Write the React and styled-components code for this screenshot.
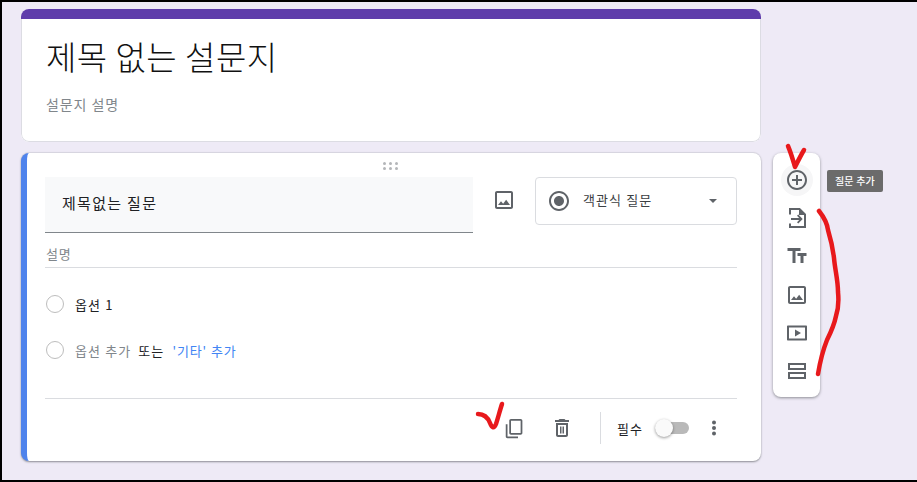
import React from "react";
import styled, { createGlobalStyle } from "styled-components";

const Global = createGlobalStyle`
  html, body { margin: 0; padding: 0; }
  body { font-family: "Noto Sans CJK KR", "Noto Sans", sans-serif; }
`;

const Page = styled.div`
  position: relative;
  box-sizing: border-box;
  width: 917px;
  height: 482px;
  border: solid #000;
  border-width: 2px 0 2px 2px;
  background: #eeeaf6;
  padding: 7px 0 0 19px;
  overflow: hidden;
  display: flex;
  gap: 12px;
  align-items: flex-start;
`;

const Column = styled.div`
  width: 740px;
  display: flex;
  flex-direction: column;
  gap: 11px;
`;

const Card = styled.section`
  box-sizing: border-box;
  background: #fff;
  border-radius: 8px;
`;

const HeaderCard = styled(Card)`
  height: 133px;
  display: flex;
  flex-direction: column;
  overflow: hidden;
`;

const AccentBar = styled.div`
  flex: none;
  height: 10px;
  background: #5f3dab;
`;

const HeaderBody = styled.div`
  flex: 1;
  border: 1px solid #dcdce3;
  border-top: 0;
  border-radius: 0 0 8px 8px;
`;

const Title = styled.h1`
  margin: 14px 0 0 24px;
  font-size: 33px;
  line-height: 46px;
  font-weight: 300;
  letter-spacing: 0.5px;
  color: #111;
`;

const FormDesc = styled.p`
  margin: 15px 0 0 24px;
  font-size: 14px;
  line-height: 20px;
  letter-spacing: 0.9px;
  color: #80868b;
`;

const QuestionCard = styled(Card)`
  position: relative;
  height: 308px;
  padding: 24px 24px 0 24px;
  border-left: 6px solid #4f83ec;
  box-shadow: 0 1px 2px rgba(60, 64, 67, 0.55), 0 -1px 1px rgba(60, 64, 67, 0.1);
`;

const DragHandle = styled.div`
  position: absolute;
  top: 9px;
  left: 356px;
  display: grid;
  grid-template-columns: repeat(3, 3px);
  gap: 2px 3px;
  & > i { width: 3px; height: 3px; border-radius: 50%; background: #b4b6b9; }
`;

const TopRow = styled.div`
  display: flex;
  align-items: flex-start;
  margin-left: -6px;
`;

const TitleField = styled.div`
  box-sizing: border-box;
  width: 428px;
  height: 56px;
  padding: 15px 0 0 17px;
  background: #f8f9fa;
  border-bottom: 1px solid #80868b;
  font-size: 15px;
  line-height: 22px;
  letter-spacing: 1.3px;
  color: #202124;
`;

const ImageButton = styled.div`
  width: 62px;
  height: 46px;
  display: flex;
  align-items: center;
  justify-content: center;
`;

const TypeSelect = styled.div`
  box-sizing: border-box;
  width: 202px;
  height: 48px;
  border: 1px solid #dadce0;
  border-radius: 4px;
  display: flex;
  align-items: center;
  padding: 0 18px 0 11px;
  font-size: 13px;
  letter-spacing: 1.1px;
  color: #3c4043;
  & > span { margin: -3px 0 0 12px; flex: 1; }
`;

const Description = styled.div`
  box-sizing: border-box;
  height: 24px;
  margin: 11px 0 0 -6px;
  border-bottom: 1px solid #dadce0;
  padding-left: 1px;
  font-size: 13px;
  line-height: 20px;
  letter-spacing: 0.8px;
  color: #80868b;
`;

const OptionRow = styled.div`
  display: flex;
  align-items: center;
  height: 46px;
  margin-left: -6px;
  font-size: 13px;
  letter-spacing: 1.1px;
  color: ${(p) => (p.$muted ? "#80868b" : "#202124")};
`;

const Options = styled.div`
  padding-top: 13px;
`;

const Radio = styled.span`
  box-sizing: border-box;
  flex: none;
  width: 18px;
  height: 18px;
  margin: 0 11px 0 1px;
  border: 1px solid #bdbdbd;
  border-radius: 50%;
`;

const Dark = styled.span`
  color: #202124;
  margin: 0 8px 0 7px;
`;

const LinkText = styled.span`
  color: #4285f4;
  letter-spacing: 0.9px;
`;

const Footer = styled.div`
  margin: 25px 0 0 -6px;
  border-top: 1px solid #dadce0;
  height: 58px;
  display: flex;
  align-items: center;
  justify-content: flex-end;
  padding-right: 11px;
`;

const FooterIcon = styled.div`
  width: 47px;
  display: flex;
  justify-content: center;
`;

const Separator = styled.div`
  width: 1px;
  height: 32px;
  background: #dadce0;
  margin: 0 16px 0 15px;
`;

const RequiredLabel = styled.span`
  font-size: 13px;
  letter-spacing: 1px;
  color: #202124;
  margin-right: 12px;
`;

const Switch = styled.div`
  position: relative;
  width: 34px;
  height: 12px;
  border-radius: 6px;
  background: #b9b9b9;
  margin-right: 13px;
  &::after {
    content: "";
    position: absolute;
    left: 0;
    top: -3px;
    width: 18px;
    height: 18px;
    border-radius: 50%;
    background: #fafafa;
    box-shadow: 0 1px 3px rgba(0, 0, 0, 0.4);
  }
`;

const Sidebar = styled(Card)`
  position: relative;
  flex: none;
  margin-top: 144px;
  width: 47px;
  height: 244px;
  padding-top: 11px;
  display: flex;
  flex-direction: column;
  align-items: center;
  box-shadow: 0 1px 3px rgba(60, 64, 67, 0.55);
`;

const Tool = styled.div`
  flex: none;
  width: 32px;
  height: 32px;
  margin-bottom: 6.2px;
  display: flex;
  align-items: center;
  justify-content: center;
  border-radius: 50%;
  background: ${(p) => (p.$active ? "#f6f6f7" : "transparent")};
`;

const Tooltip = styled.div`
  position: absolute;
  left: 54px;
  top: 17px;
  width: 56px;
  height: 22px;
  box-sizing: border-box;
  border-radius: 2px;
  background: #6b6b6b;
  color: #fff;
  font-size: 10px;
  font-weight: 500;
  letter-spacing: 0.2px;
  line-height: 22px;
  text-align: center;
  white-space: nowrap;
`;

const Ink = styled.svg`
  position: absolute;
  left: -2px;
  top: -2px;
  width: 917px;
  height: 482px;
  pointer-events: none;
`;

const Icon = ({ size = 24, flip, children }) => (
  <svg width={size} height={size} viewBox="0 0 24 24" fill="#5f6368"
    style={flip ? { transform: "scaleY(-1)" } : undefined}>
    {children}
  </svg>
);

const ImageGlyph = () => (
  <Icon>
    <path d="M19 5v14H5V5h14m0-2H5c-1.1 0-2 .9-2 2v14c0 1.1.9 2 2 2h14c1.1 0 2-.9 2-2V5c0-1.1-.9-2-2-2zm-4.86 8.86l-3 3.87L9 13.14 6 17h12l-3.86-5.14z" />
  </Icon>
);

export default function App() {
  return (
    <>
      <Global />
      <Page>
        <Column>
          <HeaderCard>
            <AccentBar />
            <HeaderBody>
              <Title>제목 없는 설문지</Title>
              <FormDesc>설문지 설명</FormDesc>
            </HeaderBody>
          </HeaderCard>
          <QuestionCard>
            <DragHandle>
              <i /><i /><i /><i /><i /><i />
            </DragHandle>
            <TopRow>
              <TitleField>제목없는 질문</TitleField>
              <ImageButton><ImageGlyph /></ImageButton>
              <TypeSelect>
                <Icon>
                  <path d="M12 7c-2.76 0-5 2.24-5 5s2.24 5 5 5 5-2.24 5-5-2.24-5-5-5zm0-5C6.48 2 2 6.48 2 12s4.48 10 10 10 10-4.48 10-10S17.52 2 12 2zm0 18c-4.42 0-8-3.58-8-8s3.58-8 8-8 8 3.58 8 8-3.58 8-8 8z" />
                </Icon>
                <span>객관식 질문</span>
                <svg width="10" height="6" viewBox="0 0 10 6" fill="#5f6368"><path d="M1 1l4 4 4-4z" /></svg>
              </TypeSelect>
            </TopRow>
            <Description>설명</Description>
            <Options>
              <OptionRow><Radio />옵션 1</OptionRow>
              <OptionRow $muted>
                <Radio />옵션 추가<Dark>또는</Dark><LinkText>'기타' 추가</LinkText>
              </OptionRow>
            </Options>
            <Footer>
              <FooterIcon>
                <Icon size={21} flip>
                  <path d="M16 1H4c-1.1 0-2 .9-2 2v14h2V3h12V1zm3 4H8c-1.1 0-2 .9-2 2v14c0 1.1.9 2 2 2h11c1.1 0 2-.9 2-2V7c0-1.1-.9-2-2-2zm0 16H8V7h11v14z" />
                </Icon>
              </FooterIcon>
              <FooterIcon>
                <Icon>
                  <path d="M6 19c0 1.1.9 2 2 2h8c1.1 0 2-.9 2-2V7H6v12zM8 9h8v10H8V9zm7.5-5l-1-1h-5l-1 1H5v2h14V4h-3.5z" />
                  <path d="M10 10.5h1.5v7H10zM12.5 10.5H14v7h-1.5z" />
                </Icon>
              </FooterIcon>
              <Separator />
              <RequiredLabel>필수</RequiredLabel>
              <Switch />
              <svg width="24" height="24" viewBox="0 0 24 24" fill="#5f6368">
                <circle cx="12" cy="6.5" r="2" />
                <circle cx="12" cy="12" r="2" />
                <circle cx="12" cy="17.5" r="2" />
              </svg>
            </Footer>
          </QuestionCard>
        </Column>
        <Sidebar>
          <Tool $active>
            <Icon>
              <path d="M13 7h-2v4H7v2h4v4h2v-4h4v-2h-4V7zm-1-5C6.48 2 2 6.48 2 12s4.48 10 10 10 10-4.48 10-10S17.52 2 12 2zm0 18c-4.41 0-8-3.59-8-8s3.59-8 8-8 8 3.59 8 8-3.59 8-8 8z" />
            </Icon>
          </Tool>
          <Tool>
            <Icon>
              <path d="M5 8.5V3h9.5L20 8.5V21H5v-3.5" fill="none" stroke="#5f6368" strokeWidth="2" />
              <path d="M14 3l6 6h-6z" />
              <path d="M6 12h8.2l-2.2-2.2 1.3-1.3 4.4 4.5-4.4 4.5-1.3-1.3 2.2-2.2H6z" />
            </Icon>
          </Tool>
          <Tool>
            <Icon><path d="M2.5 4v3h5v12h3V7h5V4h-13zm19 5h-9v3h3v7h3v-7h3V9z" /></Icon>
          </Tool>
          <Tool><ImageGlyph /></Tool>
          <Tool>
            <Icon>
              <path d="M3 4.5h18c.6 0 1 .4 1 1v13c0 .6-.4 1-1 1H3c-.6 0-1-.4-1-1v-13c0-.6.4-1 1-1zm1 2v11h16v-11H4z" />
              <path d="M10 8.5v7l6-3.5z" />
            </Icon>
          </Tool>
          <Tool>
            <Icon>
              <path d="M3 4h18v7H3V4zm2 2v3h14V6H5zM3 13h18v7H3v-7zm2 2v3h14v-3H5z" />
            </Icon>
          </Tool>
          <Tooltip>질문 추가</Tooltip>
        </Sidebar>
        <Ink viewBox="0 0 917 482" fill="none" stroke="#e8191c" strokeWidth="4.5" strokeLinecap="round" strokeLinejoin="round">
          <path d="M788 146C791 153 793 160 795 167C798 161 801 155 804 150" />
          <path d="M819 211C823 216 827 222 828 230C831 240 833 250 834 258C835 270 838 280 838 292C839 302 838 310 836 316C834 326 830 334 827 340C823 350 820 362 818 374" />
          <path d="M478 414C484 414 488 418 490 423C492 428 494 429 496 424C498 418 500 410 502 404" />
        </Ink>
      </Page>
    </>
  );
}
